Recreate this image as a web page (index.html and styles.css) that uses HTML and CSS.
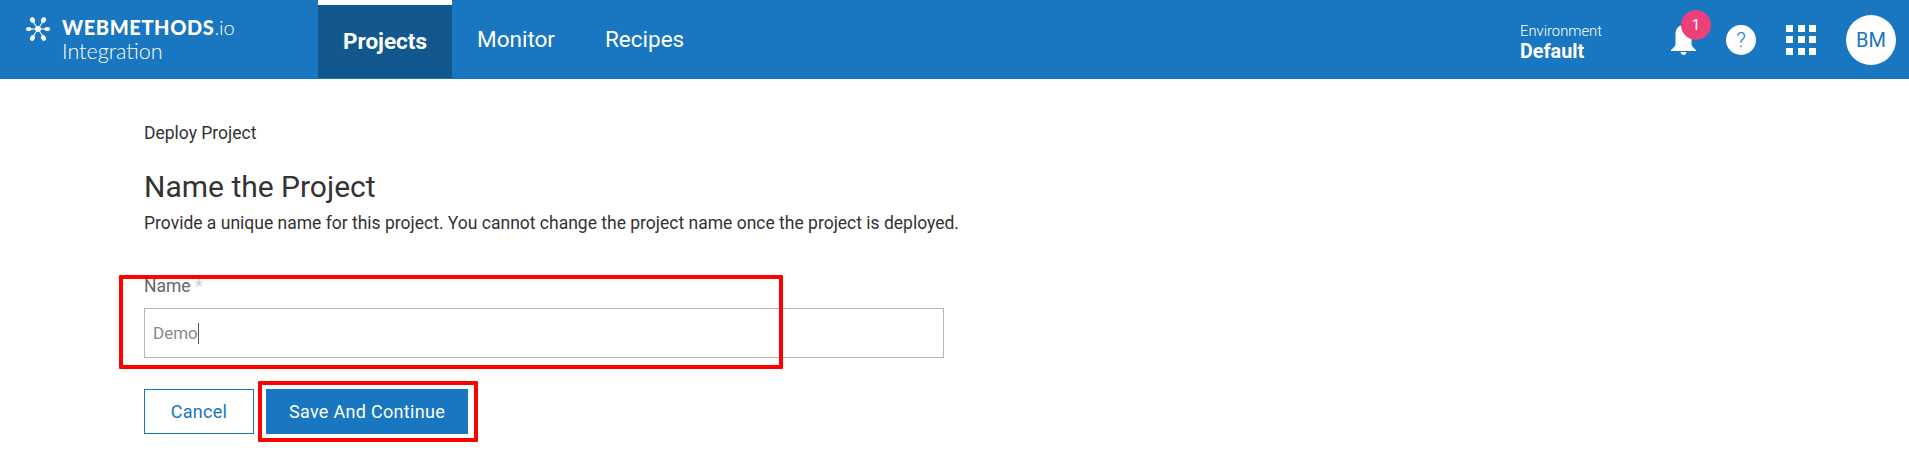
FILE: index.html
```html
<!DOCTYPE html>
<html lang="en">
<head>
    <meta charset="UTF-8">
    <meta name="viewport" content="width=device-width, initial-scale=1.0">
    <title>Deploy Project</title>
    <link rel="stylesheet" href="styles.css">
</head>
<body>

    <header class="topbar">
        <div class="brand">
            <svg class="brand-mark" width="24" height="24" viewBox="0 0 24 24">
                <g stroke="#fff" stroke-width="1.1">
                    <line x1="12" y1="12" x2="6" y2="3"/>
                    <line x1="12" y1="12" x2="18" y2="3"/>
                    <line x1="12" y1="12" x2="2" y2="12"/>
                    <line x1="12" y1="12" x2="22" y2="12"/>
                    <line x1="12" y1="12" x2="6" y2="21"/>
                    <line x1="12" y1="12" x2="18" y2="21"/>
                </g>
                <g fill="#fff">
                    <circle cx="12" cy="12" r="3"/>
                    <ellipse cx="6.5" cy="3" rx="2.3" ry="3" transform="rotate(-30 6.5 3)"/>
                    <ellipse cx="17.5" cy="3" rx="2.3" ry="3" transform="rotate(30 17.5 3)"/>
                    <ellipse cx="2.7" cy="12" rx="2.7" ry="2.1"/>
                    <ellipse cx="21.3" cy="12" rx="2.7" ry="2.1"/>
                    <ellipse cx="6.5" cy="21" rx="2.3" ry="3" transform="rotate(30 6.5 21)"/>
                    <ellipse cx="17.5" cy="21" rx="2.3" ry="3" transform="rotate(-30 17.5 21)"/>
                </g>
            </svg>
            <div class="brand-text">
                <div class="brand-name">WEBMETHODS<span class="brand-io">.io</span></div>
                <div class="brand-sub">Integration</div>
            </div>
        </div>

        <nav class="nav">
            <a class="nav-item active">Projects</a>
            <a class="nav-item">Monitor</a>
            <a class="nav-item">Recipes</a>
        </nav>

        <div class="topbar-right">
            <div class="env">
                <div class="env-label">Environment</div>
                <div class="env-value">Default</div>
            </div>
            <div class="bell">
                <svg width="25" height="32" viewBox="0 0 25 32">
                    <path fill="#fff" d="M12.5 1C7.5 1 4.5 5 4.5 10v10c0 2-2 4-4.5 6v1h25v-1c-2.5-2-4.5-4-4.5-6V10c0-5-3-9-8-9z"/>
                    <path fill="#fff" d="M9.5 28h6c-.5 2-1.5 3-3 3s-2.5-1-3-3z"/>
                </svg>
                <span class="badge">1</span>
            </div>
            <div class="help">?</div>
            <div class="apps">
                <i></i><i></i><i></i><i></i><i></i><i></i><i></i><i></i><i></i>
            </div>
            <div class="avatar">BM</div>
        </div>
    </header>

    <main class="content">
        <div class="crumb">Deploy Project</div>
        <h1 class="title">Name the Project</h1>
        <p class="desc">Provide a unique name for this project. You cannot change the project name once the project is deployed.</p>

        <div class="field">
            <label class="field-label">Name <span class="req">*</span></label>
            <div class="input">Demo<span class="caret"></span></div>
            <div class="mark mark-field"></div>
        </div>

        <div class="actions">
            <button class="btn btn-cancel">Cancel</button>
            <div class="save-wrap">
                <button class="btn btn-save">Save And Continue</button>
                <div class="mark mark-save"></div>
            </div>
        </div>
    </main>

</body>
</html>
```

FILE: styles.css
```css
html, body {
    height: 100%;
}
body {
    margin: 0;
    font-family: Roboto, "Liberation Sans", sans-serif;
    color: #333;
    background-color: white;
}

/* top bar */
.topbar {
    display: flex;
    height: 79px;
    background-color: #1976c0;
    color: white;
}
.brand {
    display: flex;
    width: 318px;
    padding: 17px 0 0 26px;
    box-sizing: border-box;
}
.brand-mark {
    margin-right: 12px;
}
.brand-text {
    font-family: Lato, sans-serif;
}
.brand-name {
    font-size: 20px;
    font-weight: 900;
    line-height: 24px;
    margin-top: -2px;
    letter-spacing: 0.6px;
}
.brand-io {
    font-weight: 300;
    letter-spacing: 0;
}
.brand-sub {
    font-size: 21.5px;
    font-weight: 300;
    line-height: 24px;
}
.nav {
    display: flex;
}
.nav-item {
    display: flex;
    align-items: center;
    padding: 0 25px 2px;
    font-size: 22.5px;
}
.nav-item.active {
    background-color: #12588f;
    border-top: 5px solid white;
    font-weight: 700;
    box-sizing: border-box;
    height: 78px;
}
.topbar-right {
    display: flex;
    align-items: center;
    margin-left: auto;
}
.env {
    width: 151px;
    margin-top: 4px;
}
.env-label {
    font-size: 14.8px;
    font-weight: 300;
    line-height: 20px;
}
.env-value {
    font-size: 19.8px;
    font-weight: 700;
    line-height: 22px;
}
.bell {
    position: relative;
    width: 25px;
    height: 32px;
    margin-right: 30px;
}
.badge {
    position: absolute;
    left: 10px;
    top: -14px;
    width: 30px;
    height: 30px;
    border-radius: 50%;
    background-color: #ec407a;
    text-align: center;
    font-size: 15px;
    line-height: 30px;
}
.help {
    width: 30px;
    height: 30px;
    border-radius: 50%;
    background-color: white;
    color: #1976c0;
    text-align: center;
    font-size: 21px;
    font-weight: 300;
    line-height: 30px;
    margin-right: 30px;
}
.apps {
    display: grid;
    grid-template-columns: repeat(3, 7px);
    grid-auto-rows: 7px;
    gap: 4.5px;
    margin-right: 30px;
}
.apps i {
    background-color: white;
}
.avatar {
    width: 50px;
    height: 50px;
    border-radius: 50%;
    background-color: white;
    color: #1976c0;
    text-align: center;
    font-size: 20px;
    line-height: 50px;
    margin-right: 13px;
}

/* form */
.content {
    padding: 44px 0 30px 144px;
}
.crumb {
    font-size: 17.5px;
    line-height: 20px;
}
.title {
    margin: 26px 0 0;
    font-size: 30px;
    font-weight: 400;
    line-height: 36px;
}
.desc {
    margin: 6px 0 0;
    font-size: 17.5px;
    line-height: 24px;
}
.field {
    position: relative;
    width: 800px;
    margin-top: 40px;
}
.field-label {
    display: block;
    font-size: 17.5px;
    line-height: 22px;
    color: #666;
}
.req {
    color: #ccc;
}
.input {
    display: flex;
    align-items: center;
    height: 50px;
    margin-top: 11px;
    padding-left: 8px;
    box-sizing: border-box;
    border: 1px solid #b5b5b5;
    font-size: 17px;
    color: #888;
}
.caret {
    width: 1px;
    height: 21px;
    background-color: #555;
}
.actions {
    display: flex;
    align-items: flex-start;
    gap: 12px;
    margin-top: 31px;
}
.btn {
    height: 45px;
    font-family: inherit;
    font-size: 18px;
    letter-spacing: 0.3px;
}
.btn-cancel {
    width: 110px;
    background-color: white;
    border: 1px solid #1976c0;
    color: #1976c0;
}
.btn-save {
    display: block;
    width: 202px;
    background-color: #1976c0;
    border: none;
    color: white;
}
.save-wrap {
    position: relative;
}

/* red annotation boxes drawn over the shot */
.mark {
    position: absolute;
    border: 4px solid #f00;
    box-sizing: border-box;
    border-radius: 1px;
    pointer-events: none;
}
.mark-field {
    left: -25px;
    top: 0;
    width: 664px;
    height: 94px;
}
.mark-save {
    left: -8px;
    top: -8px;
    width: 220px;
    height: 61px;
}
```
